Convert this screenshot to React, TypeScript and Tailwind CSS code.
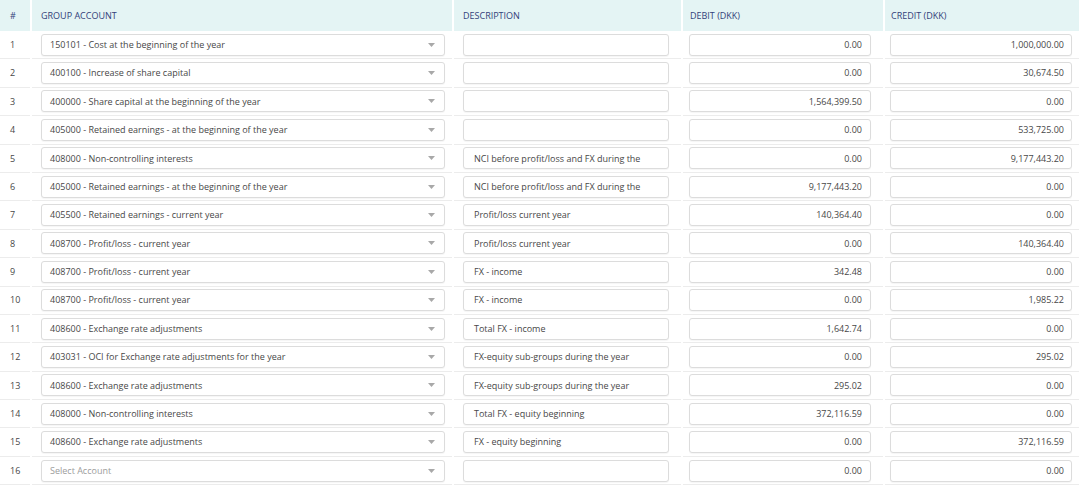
const rows: [string, string, string, string][] = [
  ["150101 - Cost at the beginning of the year", "", "0.00", "1,000,000.00"],
  ["400100 - Increase of share capital", "", "0.00", "30,674.50"],
  ["400000 - Share capital at the beginning of the year", "", "1,564,399.50", "0.00"],
  ["405000 - Retained earnings - at the beginning of the year", "", "0.00", "533,725.00"],
  ["408000 - Non-controlling interests", "NCI before profit/loss and FX during the", "0.00", "9,177,443.20"],
  ["405000 - Retained earnings - at the beginning of the year", "NCI before profit/loss and FX during the", "9,177,443.20", "0.00"],
  ["405500 - Retained earnings - current year", "Profit/loss current year", "140,364.40", "0.00"],
  ["408700 - Profit/loss - current year", "Profit/loss current year", "0.00", "140,364.40"],
  ["408700 - Profit/loss - current year", "FX - income", "342.48", "0.00"],
  ["408700 - Profit/loss - current year", "FX - income", "0.00", "1,985.22"],
  ["408600 - Exchange rate adjustments", "Total FX - income", "1,642.74", "0.00"],
  ["403031 - OCI for Exchange rate adjustments for the year", "FX-equity sub-groups during the year", "0.00", "295.02"],
  ["408600 - Exchange rate adjustments", "FX-equity sub-groups during the year", "295.02", "0.00"],
  ["408000 - Non-controlling interests", "Total FX - equity beginning", "372,116.59", "0.00"],
  ["408600 - Exchange rate adjustments", "FX - equity beginning", "0.00", "372,116.59"],
  ["", "", "0.00", "0.00"],
];

const cols = "grid grid-cols-[30px_420px_227px_200px_1fr] gap-x-[2px]";
const cell = "border-b border-[#ececec] flex items-center";
const box =
  "h-[22px] rounded-[3px] border border-[#dcdcdc] bg-white shadow-[0_1px_1px_rgba(0,0,0,0.04)] flex items-center text-[9px] text-[#474747]";

function Caret() {
  return (
    <svg width="7" height="4" viewBox="0 0 7 4" className="ml-auto mr-[9px]">
      <path d="M0 0h7L3.5 4z" fill="#a8a8a8" />
    </svg>
  );
}

export default function App() {
  return (
    <div className="w-[1079px] h-[491px] bg-white overflow-hidden font-['Open_Sans',sans-serif]">
      <div className={cols + " h-[31px] text-[9px] text-[#33417a] uppercase"}>
        <div className="bg-[#e4f4f4] flex items-center pl-[10px]">#</div>
        <div className="bg-[#e4f4f4] flex items-center pl-[9px]">Group Account</div>
        <div className="bg-[#e4f4f4] flex items-center pl-[9px]">Description</div>
        <div className="bg-[#e4f4f4] flex items-center pl-[7px]">Debit (DKK)</div>
        <div className="bg-[#e4f4f4] flex items-center pl-[6px]">Credit (DKK)</div>
      </div>
      {rows.map(([acc, desc, debit, credit], i) => (
        <div key={i} className={cols + " h-[28.4px]"}>
          <div className={cell + " pl-[10px] text-[9px] text-[#474747]"}>{i + 1}</div>
          <div className={cell + " pl-[9px] pr-[7px]"}>
            <div className={box + " w-full pl-[8px]"}>
              <span className={acc ? "" : "text-[#9c9c9c]"}>{acc || "Select Account"}</span>
              <Caret />
            </div>
          </div>
          <div className={cell + " pl-[9px] pr-[12px]"}>
            <div className={box + " w-full pl-[10px] whitespace-nowrap overflow-hidden"}>{desc}</div>
          </div>
          <div className={cell + " pl-[6px] pr-[12px]"}>
            <div className={box + " w-full justify-end pr-[8px]"}>{debit}</div>
          </div>
          <div className={cell + " pl-[5px] pr-[7px]"}>
            <div className={box + " w-full justify-end pr-[7px]"}>{credit}</div>
          </div>
        </div>
      ))}
    </div>
  );
}
